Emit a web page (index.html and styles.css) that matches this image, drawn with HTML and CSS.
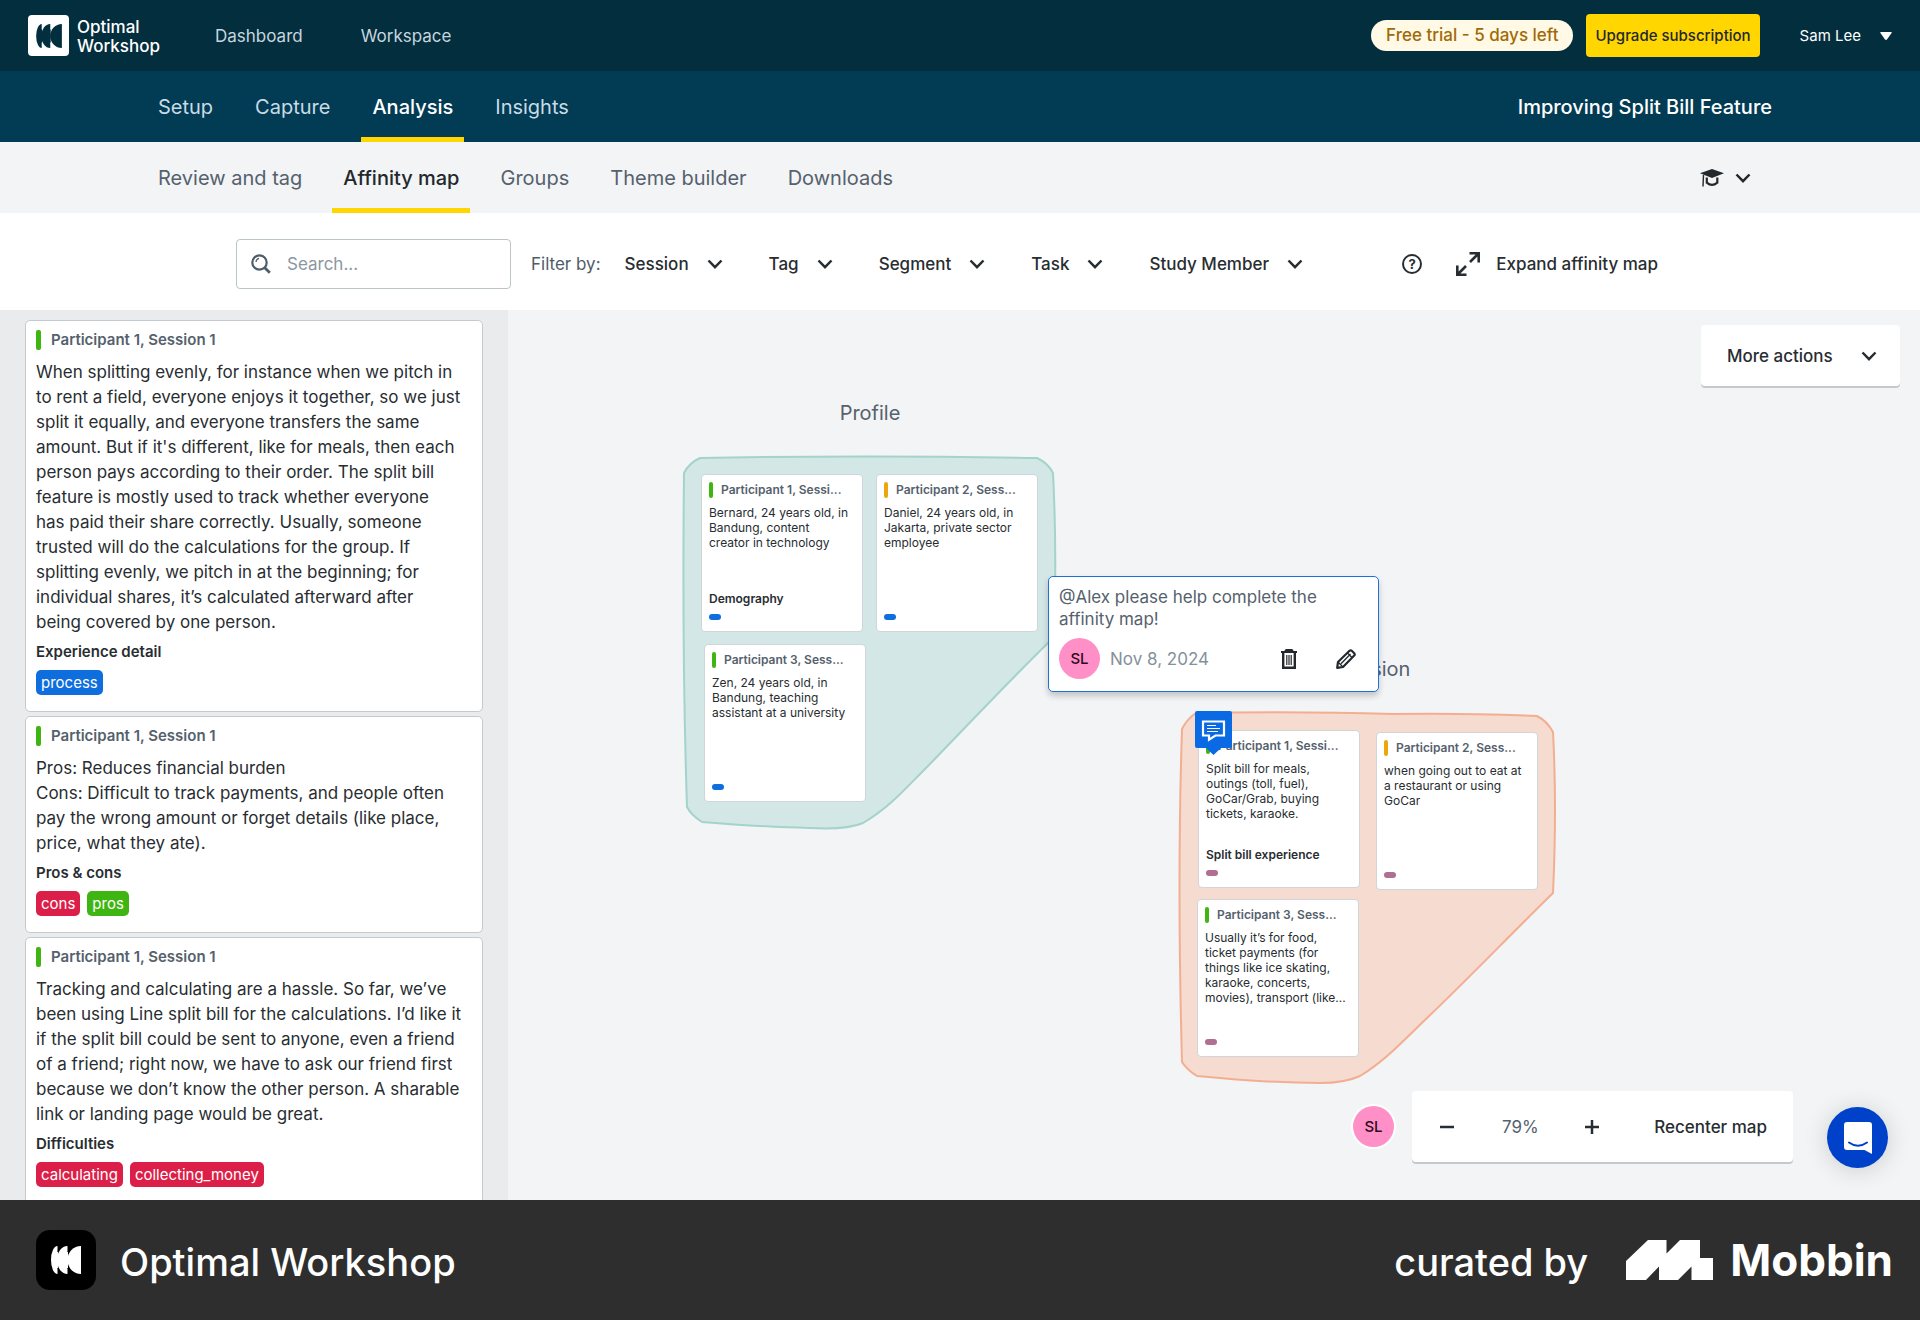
FILE: index.html
```html
<!DOCTYPE html>
<html lang="en">
<head>
<meta charset="utf-8">
<meta name="viewport" content="width=device-width, initial-scale=1">
<title>Affinity map – Improving Split Bill Feature</title>
<link rel="stylesheet" href="styles.css">
</head>
<body>
<svg class="defs" aria-hidden="true">
  <symbol id="chevron" viewBox="0 0 16 10"><path d="M1.500 1.500 8 8.200l6.500-6.700" fill="none" stroke="currentColor" stroke-width="2.500"/></symbol>
  <symbol id="mark" viewBox="0 0 30 28"><path d="M30 0v28A13.500 14 0 0 1 30 0Z"/><path d="M16.500 0v5Q13 14 16.500 23v5A10.500 14 0 0 1 16.500 0Z"/><path d="M16 10v8l1-4Z"/><path d="M6.500 0v5Q4 14 6.500 23v5A6.500 14 0 0 1 6.500 0Z"/><path d="M14 6h3v16h-3ZM4 6h3v16H4Z"/></symbol>
</svg>

<header class="topbar">
  <a class="brand" href="#">
    <span class="brand-tile"><svg width="26" height="24"><use href="#mark"/></svg></span>
    <span class="brand-name">Optimal<br>Workshop</span>
  </a>
  <nav class="top-links">
    <a href="#">Dashboard</a>
    <a href="#">Workspace</a>
  </nav>
  <div class="account">
    <span class="trial">Free trial - 5 days left</span>
    <button class="upgrade" type="button">Upgrade subscription</button>
    <button class="user" type="button">Sam Lee <svg width="12" height="8" viewBox="0 0 12 8"><path d="M1 0h10q1.200.2.600 1L7 7.500q-1 .8-2 0L.4 1Q-.2.2 1 0Z" fill="currentColor"/></svg></button>
  </div>
</header>

<div class="studybar">
  <nav class="tabs study-tabs">
    <a href="#">Setup</a>
    <a href="#">Capture</a>
    <a class="current" href="#">Analysis</a>
    <a href="#">Insights</a>
  </nav>
  <h1 class="study-name">Improving Split Bill Feature</h1>
</div>

<div class="subbar">
  <nav class="tabs sub-tabs">
    <a href="#">Review and tag</a>
    <a class="current" href="#">Affinity map</a>
    <a href="#">Groups</a>
    <a href="#">Theme builder</a>
    <a href="#">Downloads</a>
  </nav>
  <button class="learn" type="button" aria-label="Learning resources">
    <svg width="24" height="18" viewBox="0 0 24 18"><path d="M12 0 24 4.300 12 9 0 4.300Z" fill="currentColor"/><path d="M6.800 8.500v5.200q5.200 4.500 10.500 0V8.500" fill="none" stroke="currentColor" stroke-width="2.200"/><path d="M3.500 6 3 17.500" stroke="currentColor" stroke-width="1.400"/></svg>
    <svg width="16" height="10"><use href="#chevron"/></svg>
  </button>
</div>

<div class="toolbar">
  <label class="search">
    <svg width="20" height="20" viewBox="0 0 20 20" fill="none" stroke="currentColor"><circle cx="8.500" cy="8.500" r="7.200" stroke-width="2.200"/><path d="M5 8q.3-3 3-3.600" stroke-width="1.200"/><path d="m13.500 13.500 5.300 5.300" stroke-width="2.800"/></svg>
    <input type="search" placeholder="Search..." aria-label="Search observations">
  </label>
  <span class="filter-label">Filter by:</span>
  <div class="filters">
    <button type="button">Session <svg width="16" height="10"><use href="#chevron"/></svg></button>
    <button type="button">Tag <svg width="16" height="10"><use href="#chevron"/></svg></button>
    <button type="button">Segment <svg width="16" height="10"><use href="#chevron"/></svg></button>
    <button type="button">Task <svg width="16" height="10"><use href="#chevron"/></svg></button>
    <button type="button">Study Member <svg width="16" height="10"><use href="#chevron"/></svg></button>
  </div>
  <div class="map-tools">
    <button class="help" type="button" aria-label="Help">?</button>
    <button class="expand" type="button"><svg width="24" height="24" viewBox="0 0 24 24" fill="none" stroke="currentColor" stroke-width="2.600"><path d="M13.500 1.300h9.200v9.200M22.500 1.500l-8.500 8.500M1.300 13.500v9.200h9.200M1.500 22.500 10 14"/></svg>Expand affinity map</button>
  </div>
</div>

<main class="workspace">
  <aside class="observations">
    <article class="card">
      <h2 class="source">Participant 1, Session 1</h2>
      <p class="quote">When splitting evenly, for instance when we pitch in<br>to rent a field, everyone enjoys it together, so we just<br>split it equally, and everyone transfers the same<br>amount. But if it's different, like for meals, then each<br>person pays according to their order. The split bill<br>feature is mostly used to track whether everyone<br>has paid their share correctly. Usually, someone<br>trusted will do the calculations for the group. If<br>splitting evenly, we pitch in at the beginning; for<br>individual shares, it’s calculated afterward after<br>being covered by one person.</p>
      <h3 class="topic">Experience detail</h3>
      <div class="tags"><span class="tag blue">process</span></div>
    </article>
    <article class="card">
      <h2 class="source">Participant 1, Session 1</h2>
      <p class="quote">Pros: Reduces financial burden<br>Cons: Difficult to track payments, and people often<br>pay the wrong amount or forget details (like place,<br>price, what they ate).</p>
      <h3 class="topic">Pros &amp; cons</h3>
      <div class="tags"><span class="tag red">cons</span><span class="tag green">pros</span></div>
    </article>
    <article class="card">
      <h2 class="source">Participant 1, Session 1</h2>
      <p class="quote">Tracking and calculating are a hassle. So far, we’ve<br>been using Line split bill for the calculations. I’d like it<br>if the split bill could be sent to anyone, even a friend<br>of a friend; right now, we have to ask our friend first<br>because we don’t know the other person. A sharable<br>link or landing page would be great.</p>
      <h3 class="topic">Difficulties</h3>
      <div class="tags"><span class="tag red">calculating</span><span class="tag red">collecting_money</span></div>
    </article>
  </aside>

  <section class="canvas" aria-label="Affinity map">
    <div class="group group-profile">
      <h2 class="group-name">Profile</h2>
      <svg class="blob teal" width="374" height="374" viewBox="0 0 374 374"><path d="M17 2Q180-1 354 2 365 7 370 17 374 95 371 181C321 230 285 269 244 311 223 332 206 352 180 367 166 373 146 373 127 372Q81 371 19 366 8 359 4 351-1 200 1 17 6 7 17 2Z"/></svg>
      <article class="note note-a">
        <h3 class="note-source">Participant 1, Sessi...</h3>
        <p class="note-text">Bernard, 24 years old, in<br>Bandung, content<br>creator in technology</p>
        <h4 class="note-topic">Demography</h4>
        <i class="pill"></i>
      </article>
      <article class="note note-b amber">
        <h3 class="note-source">Participant 2, Sess...</h3>
        <p class="note-text">Daniel, 24 years old, in<br>Jakarta, private sector<br>employee</p>
        <i class="pill"></i>
      </article>
      <article class="note note-c">
        <h3 class="note-source">Participant 3, Sess...</h3>
        <p class="note-text">Zen, 24 years old, in<br>Bandung, teaching<br>assistant at a university</p>
        <i class="pill"></i>
      </article>
    </div>

    <div class="group group-occasion">
      <h2 class="group-name">Occasion</h2>
      <svg class="blob coral" width="376" height="374" viewBox="0 0 376 374"><path d="M17 1Q120-1 214 2 290 1 358 4 368 9 374 20 378 95 374 181C330 224 290 266 248 306 225 328 205 350 181 364 168 370 155 371 141 371Q90 371 18 364 8 358 3 350-2 170 3 17 8 7 17 1Z"/></svg>
      <article class="note note-a mauve">
        <h3 class="note-source">Participant 1, Sessi...</h3>
        <p class="note-text">Split bill for meals,<br>outings (toll, fuel),<br>GoCar/Grab, buying<br>tickets, karaoke.</p>
        <h4 class="note-topic">Split bill experience</h4>
        <i class="pill"></i>
      </article>
      <article class="note note-b mauve amber">
        <h3 class="note-source">Participant 2, Sess...</h3>
        <p class="note-text">when going out to eat at<br>a restaurant or using<br>GoCar</p>
        <i class="pill"></i>
      </article>
      <article class="note note-c mauve">
        <h3 class="note-source">Participant 3, Sess...</h3>
        <p class="note-text">Usually it’s for food,<br>ticket payments (for<br>things like ice skating,<br>karaoke, concerts,<br>movies), transport (like...</p>
        <i class="pill"></i>
      </article>
      <button class="pin" type="button" aria-label="Show comment"><svg width="37" height="44" viewBox="0 0 37 44"><path d="M2 0h33q2 0 2 2v33q0 2-2 2h-9l-7.500 7L11 37H2q-2 0-2-2V2Q0 0 2 0Z" fill="#096ae3"/><path d="M8 10.500h21v14H20.500l-6.500 4.200v-4.200H8Z" fill="none" stroke="#fff" stroke-width="2.200"/><path d="M12 14.500h9M12 17.500h13M12 20.500h11" stroke="#fff" stroke-width="1.200"/></svg></button>
    </div>

    <div class="comment">
      <p class="comment-text">@Alex please help complete the<br>affinity map!</p>
      <div class="comment-meta">
        <span class="avatar">SL</span>
        <time datetime="2024-11-08">Nov 8, 2024</time>
        <button type="button" aria-label="Delete comment"><svg width="18" height="20" viewBox="0 0 18 20" fill="none" stroke="currentColor"><path d="M1 3h16M5.500 2q0-1 1-1h5q1 0 1 1" stroke-width="2"/><path d="M3.200 3v15.700h11.600V3" stroke-width="2.400"/><path d="M6.800 6v10M9 6v10M11.200 6v10" stroke-width="1.200"/></svg></button>
        <button type="button" aria-label="Edit comment"><svg width="20" height="20" viewBox="0 0 20 20" fill="none" stroke="currentColor" stroke-linejoin="round"><path d="M1.200 18.800 2 13 13.500 1.800q1.200-1 2.500.2l2.200 2.200q1 1.200 0 2.300L7 18Z" stroke-width="2.200"/><path d="M5 14.800 14.500 5M11.500 4l4.500 4.500M2.500 13.500l4 4" stroke-width="1.300"/></svg></button>
      </div>
    </div>

    <button class="more" type="button">More actions <svg width="16" height="10"><use href="#chevron"/></svg></button>

    <div class="dock">
      <span class="avatar ringed">SL</span>
      <div class="zoom">
        <button type="button" aria-label="Zoom out"><svg width="14" height="14" viewBox="0 0 14 14"><path d="M0 7h14" stroke="currentColor" stroke-width="2.500"/></svg></button>
        <output>79%</output>
        <button type="button" aria-label="Zoom in"><svg width="14" height="14" viewBox="0 0 14 14"><path d="M0 7h14M7 0v14" stroke="currentColor" stroke-width="2.500"/></svg></button>
        <button class="recenter" type="button">Recenter map</button>
      </div>
      <button class="chat" type="button" aria-label="Open chat"><svg width="28" height="32" viewBox="0 0 28 32"><path d="M3 0h22q3 0 3 3v29l-7.500-4H3q-3 0-3-3V3Q0 0 3 0Z" fill="#fff"/><path d="M5 20.500q9 6.500 18 0" fill="none" stroke="#0041ca" stroke-width="2" stroke-linecap="round"/></svg></button>
    </div>
  </section>
</main>

<footer class="credit">
  <span class="app-tile"><svg width="30" height="28"><use href="#mark"/></svg></span>
  <span class="app-name">Optimal Workshop</span>
  <span class="curated">curated by</span>
  <svg class="mobbin-mark" width="87" height="40" viewBox="0 0 87 40"><path d="M0 40V21L22 0h18.500v13.500L54 0h20v18h13v22H65.500V26.500L52 40H33V26.500L20 40Z" fill="#fff"/></svg>
  <span class="mobbin">Mobbin</span>
</footer>
</body>
</html>
```
FILE: styles.css
```css
* { box-sizing: border-box; }

body {
  display: flex;
  flex-direction: column;
  height: 100vh;
  margin: 0;
  font-family: Inter, "Liberation Sans", sans-serif;
  font-size: 17px;
  color: #282d31;
  background: #fff;
}

h1, h2, h3, h4, p { margin: 0; }
a { color: inherit; text-decoration: none; }
button {
  padding: 0;
  border: 0;
  background: none;
  font: inherit;
  color: inherit;
  white-space: nowrap;
  cursor: pointer;
}
svg { display: block; flex: none; }
.defs { position: absolute; width: 0; height: 0; }

/* Top bar */
.topbar {
  display: flex;
  align-items: center;
  flex: none;
  height: 71px;
  padding: 0 28px;
  background: #022e3e;
  color: #fff;
}
.brand { display: flex; align-items: center; gap: 8px; width: 187px; }
.brand-tile {
  display: grid;
  place-items: center;
  width: 41px;
  height: 41px;
  border-radius: 4px;
  background: #fff;
  fill: #022e3e;
}
.brand-name { padding-top: 2px; font-size: 17px; font-weight: 500; line-height: 19px; }
.top-links { display: flex; gap: 58px; color: #c7d6de; }
.account { display: flex; align-items: center; margin-left: auto; }
.trial {
  padding: 0 15px;
  border-radius: 16px;
  background: #fff9e6;
  color: #a16a07;
  font-weight: 500;
  line-height: 31px;
}
.upgrade {
  height: 43px;
  margin-left: 13px;
  padding: 0 9px;
  border-radius: 4px;
  background: #ffd600;
  color: #23282c;
  font-size: 15px;
  font-weight: 500;
}
.user { display: flex; align-items: center; gap: 19px; margin-left: 40px; font-size: 15px; }

/* Study and section tabs */
.studybar, .subbar {
  display: flex;
  justify-content: space-between;
  align-items: center;
  flex: none;
  height: 71px;
  padding: 0 148px 0 147px;
  font-size: 20px;
}
.studybar { background: #013b54; color: #c9dbe4; }
.subbar { background: #f2f4f6; color: #55616d; padding-right: 169px; }
.tabs { display: flex; height: 71px; }
.tabs a { border-bottom: 5px solid transparent; line-height: 72px; height: 71px; }
.tabs .current { border-color: #ffd600; font-weight: 500; }
.study-tabs { gap: 20px; }
.study-tabs a { padding: 0 11px; }
.study-tabs .current { color: #fff; }
.sub-tabs { gap: 19px; }
.sub-tabs a { padding: 0 11px; }
.sub-tabs .current { color: #23282c; }
.study-name { font-size: 20px; font-weight: 500; color: #fff; }
.learn { display: flex; align-items: center; gap: 11px; color: #23282c; }

/* Toolbar */
.toolbar {
  display: flex;
  align-items: center;
  flex: none;
  height: 97px;
  padding: 4px 262px 0 236px;
  font-weight: 500;
}
.search {
  display: flex;
  align-items: center;
  gap: 16px;
  width: 275px;
  height: 50px;
  padding: 0 14px;
  border: 1px solid #bcc5c9;
  border-radius: 4px;
  color: #4f5d69;
}
.search input { flex: 1; min-width: 0; border: 0; padding: 0; outline: 0; font: inherit; font-weight: 400; }
.search input::placeholder { color: #8b979f; opacity: 1; }
.filter-label { margin: 0 24px 0 20px; font-weight: 400; color: #4f5d69; }
.filters { display: flex; gap: 46px; }
.filters button { display: flex; align-items: center; gap: 18px; }
.map-tools { display: flex; align-items: center; gap: 34px; margin-left: auto; }
.help {
  width: 20px;
  height: 20px;
  border: 2px solid currentColor;
  border-radius: 50%;
  font-size: 13px;
  font-weight: 700;
  line-height: 16px;
}
.expand { display: flex; align-items: center; gap: 16px; }

/* Workspace */
.workspace { display: flex; flex: 1; min-height: 0; }
.observations {
  display: flex;
  flex-direction: column;
  gap: 4px;
  flex: none;
  width: 508px;
  padding: 10px 25px 0;
  background: #e9ebed;
  overflow: hidden;
}
.card {
  flex: none;
  padding: 9px 10px 15px;
  border: 1px solid #c5cacf;
  border-radius: 5px;
  background: #fff;
}
.source {
  display: flex;
  gap: 10px;
  font-size: 15px;
  font-weight: 600;
  line-height: 20px;
  color: #55616d;
}
.source::before { content: ""; width: 5px; border-radius: 2px; background: #3fb511; }
.quote { margin-top: 10px; line-height: 25px; white-space: nowrap; }
.topic { margin-top: 7px; font-size: 15px; font-weight: 600; line-height: 20px; }
.tags { display: flex; gap: 7px; margin-top: 8px; padding-bottom: 1px; }
.tag { padding: 0 5px; border-radius: 5px; font-size: 15px; line-height: 25px; color: #fff; }
.blue { background: #0f6edd; }
.red { background: #dc1f48; }
.green { background: #3fb511; }

/* Map canvas */
.canvas { position: relative; flex: 1; min-width: 0; overflow: hidden; background: #f2f4f6; }
.group { position: absolute; width: 374px; height: 374px; }
.group-profile { left: 175px; top: 146px; }
.group-occasion { left: 671px; top: 402px; }
.group-name {
  position: absolute;
  left: 0;
  right: 0;
  top: -55px;
  font-size: 20px;
  font-weight: 400;
  line-height: 24px;
  text-align: center;
  color: #55616d;
}
.blob { overflow: visible; stroke-width: 2; }
.teal { fill: #d4e7e7; stroke: #a3d3ca; }
.coral { fill: #f5dbd0; stroke: #f3ae92; }
.note {
  position: absolute;
  display: flex;
  flex-direction: column;
  width: 162px;
  height: 158px;
  padding: 7px 7px 11px;
  border: 1px solid #cfd5d8;
  border-radius: 4px;
  background: #fff;
}
.group-profile .note-a { left: 18px; top: 18px; }
.group-profile .note-b { left: 193px; top: 18px; }
.group-profile .note-c { left: 21px; top: 188px; }
.group-occasion .note-a { left: 19px; top: 18px; }
.group-occasion .note-b { left: 197px; top: 20px; }
.group-occasion .note-c { left: 18px; top: 187px; }
.note-source { display: flex; gap: 8px; font-size: 12px; font-weight: 600; line-height: 16px; color: #55616d; white-space: nowrap; }
.note-source::before { content: ""; width: 4px; border-radius: 2px; background: #3fb511; }
.amber .note-source::before { background: #eba70f; }
.note-text { margin-top: 7px; font-size: 12px; line-height: 15px; white-space: nowrap; }
.note-topic { margin: auto 0 7px; font-size: 12px; font-weight: 600; line-height: 16px; }
.pill { width: 12px; height: 6px; border-radius: 3px; background: #0f6edd; margin-top: auto; }
.note-topic + .pill { margin-top: 0; }
.mauve .pill { background: #b06f92; }
.pin { position: absolute; left: 16px; top: -1px; }

.comment {
  position: absolute;
  left: 540px;
  top: 266px;
  width: 331px;
  height: 116px;
  padding: 9px 10px;
  border: 1px solid #1f70d8;
  border-radius: 5px;
  background: #fff;
  box-shadow: 0 4px 6px rgba(0, 0, 0, .2);
  color: #55616d;
}
.comment-text { line-height: 22px; white-space: nowrap; }
.comment-meta { display: flex; align-items: center; margin-top: 8px; }
.comment-meta time { margin: 0 auto 0 10px; color: #84919a; }
.comment-meta button { margin: 0 20px 0 18px; color: #23282c; }
.comment-meta button:last-child { margin-right: 12px; }
.avatar {
  display: grid;
  place-items: center;
  width: 41px;
  height: 41px;
  border-radius: 50%;
  background: #ff8fc7;
  color: #2c0a20;
  font-size: 15px;
  font-weight: 500;
}
.ringed { box-shadow: 0 0 0 2px #fff; }

.more {
  position: absolute;
  right: 20px;
  top: 15px;
  display: flex;
  align-items: center;
  justify-content: space-between;
  width: 199px;
  height: 61px;
  padding: 0 23px 0 26px;
  border-radius: 4px;
  background: #fff;
  box-shadow: 0 2px 0 #c3cacd;
  font-weight: 500;
}
.dock { position: absolute; right: 32px; bottom: 32px; display: flex; align-items: flex-end; }
.dock .ringed { margin: 0 18px 21px 0; }
.zoom {
  display: flex;
  align-items: center;
  width: 381px;
  height: 71px;
  margin: 0 34px 6px 0;
  padding: 0 26px 0 28px;
  border-radius: 4px;
  background: #fff;
  box-shadow: 0 2px 0 #c3cacd;
}
.zoom output { margin: 0 46px 0 48px; color: #55616d; }
.zoom .recenter { margin-left: auto; font-weight: 500; }
.chat {
  display: grid;
  place-items: center;
  width: 61px;
  height: 61px;
  border-radius: 50%;
  background: #0041ca;
  box-shadow: 0 2px 24px rgba(0, 0, 0, .16);
}

/* Footer */
.credit {
  display: flex;
  align-items: center;
  flex: none;
  height: 120px;
  padding: 0 27px 0 36px;
  background: #2e2e2e;
  color: #fff;
  font-size: 38px;
  font-weight: 500;
}
.app-tile { display: grid; place-items: center; width: 60px; height: 60px; border-radius: 14px; background: #000; fill: #fff; }
.app-name { margin-left: 24px; padding-top: 3px; }
.curated { margin-left: auto; padding-top: 3px; }
.mobbin-mark { margin: 0 17px 0 38px; }
.mobbin { font-size: 44px; font-weight: 700; }
```
